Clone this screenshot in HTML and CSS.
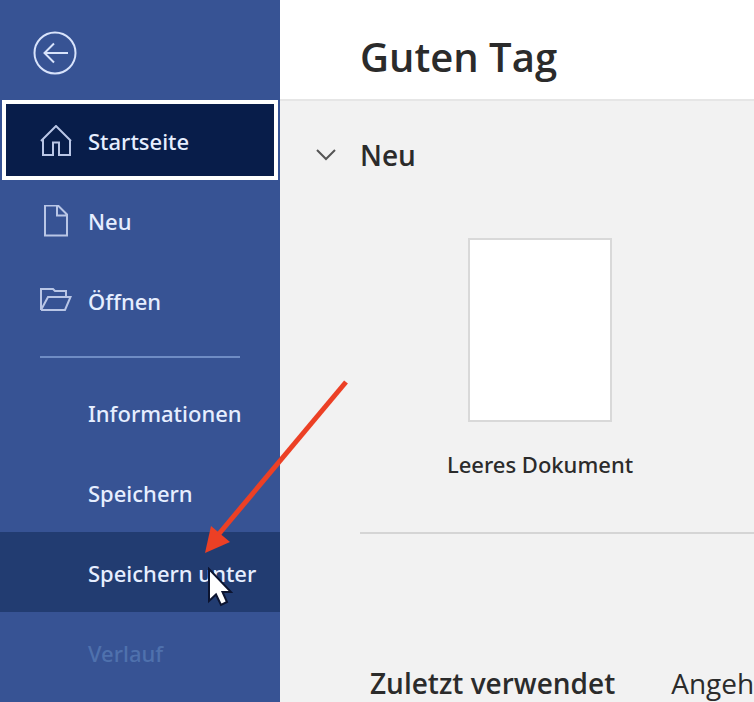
FILE: index.html
```html
<!DOCTYPE html>
<html lang="de">
<head>
<meta charset="utf-8">
<meta name="viewport" content="width=device-width, initial-scale=1">
<title>Guten Tag</title>
<link rel="stylesheet" href="styles.css">
</head>
<body>
<div class="app">
  <aside class="sidebar">
    <header class="sidebar-head">
      <button class="back" type="button" aria-label="Zurück">
        <svg width="44" height="44" viewBox="0 0 44 44" fill="none" stroke="currentColor" stroke-width="2">
          <circle cx="22" cy="22" r="20.5"/>
          <path d="M35 22H12M21 12.5L11.5 22L21 31.5"/>
        </svg>
      </button>
    </header>
    <nav class="menu">
      <a class="item item-current" href="#start">
        <svg class="icon" viewBox="0 0 32 32" fill="none" stroke="currentColor" stroke-width="2">
          <path d="M1 16L16 1L31 16M3 14.500V30H13V17.500H19V30H30V14.500"/>
        </svg>
        Startseite
      </a>
      <a class="item" href="#neu">
        <svg class="icon" viewBox="0 0 32 32" fill="none" stroke="currentColor" stroke-width="2">
          <path d="M5 0.500H18L27 9.500V30.500H5ZM17 0.500V10.500H27"/>
        </svg>
        Neu
      </a>
      <a class="item" href="#oeffnen">
        <svg class="icon" viewBox="0 0 32 32" fill="none" stroke="currentColor" stroke-width="2">
          <path d="M1 25V4H13L15 6H26V12M1 25L8 12H30.500L25 25H1"/>
        </svg>
        Öffnen
      </a>
      <hr class="menu-rule">
      <a class="item item-text" href="#info">Informationen</a>
      <a class="item item-text" href="#speichern">Speichern</a>
      <a class="item item-text item-hover" href="#speichern-unter">Speichern unter</a>
      <a class="item item-text item-disabled" aria-disabled="true">Verlauf</a>
    </nav>
  </aside>
  <main class="content">
    <header class="title-bar"><h1>Guten Tag</h1></header>
    <section class="new">
      <h2>
        <button class="toggle" type="button" aria-expanded="true">
          <svg width="20" height="12" viewBox="0 0 20 12" fill="none" stroke="#555" stroke-width="2">
            <path d="M1 1L10 10L19 1"/>
          </svg>
          Neu
        </button>
      </h2>
      <button class="template" type="button">
        <span class="sheet"></span>
        Leeres Dokument
      </button>
    </section>
    <div class="tabs">
      <button class="tab tab-active" type="button">Zuletzt verwendet</button>
      <button class="tab" type="button">Angeheftet</button>
    </div>
  </main>
  <svg class="pointer-arrow" width="146" height="176" viewBox="0 0 146 176">
    <path d="M142 2L14 155" stroke="#ec4025" stroke-width="5"/>
    <path d="M1 173L7 146L26 162Z" fill="#ec4025"/>
  </svg>
  <svg class="cursor" width="26" height="40" viewBox="0 0 26 40">
    <path d="M2 2V34L9 27.500L14 38L20 35L15.500 25H24Z" fill="#fff" stroke="#0c1430" stroke-width="2"/>
  </svg>
</div>
</body>
</html>
```
FILE: styles.css
```css
* {
  box-sizing: border-box;
}

body {
  margin: 0;
  font-family: "Noto Sans", "Open Sans", sans-serif;
  font-size: 22px;
  font-weight: 500;
  line-height: 32px;
  color: #2b2b2b;
  background: #f2f2f2;
}

h1,
h2 {
  margin: 0;
  font-weight: 600;
}

button {
  padding: 0;
  border: 0;
  background: none;
  font: inherit;
  color: inherit;
}

svg {
  display: block;
  flex: none;
}

.app {
  position: relative;
  display: flex;
  height: 100vh;
  overflow: hidden;
}

.sidebar {
  flex: none;
  width: 280px;
  background: #375394;
  color: #e6eeff;
}

.sidebar-head {
  display: flex;
  align-items: center;
  height: 100px;
  padding: 6px 33px 0;
}

.back {
  color: #d8e3fb;
}

.item {
  display: flex;
  align-items: center;
  gap: 16px;
  height: 80px;
  padding: 2px 0 0 40px;
  color: inherit;
  text-decoration: none;
  white-space: nowrap;
}

.item-current {
  margin: 0 2px;
  padding-left: 34px;
  border: 4px solid #fff;
  background: #081d4a;
}

.icon {
  width: 32px;
  height: 32px;
  color: #b9c6e6;
}

.item-text {
  padding-left: 88px;
}

.item-hover {
  background: #223c71;
}

.item-disabled {
  color: #4f71ad;
}

.menu-rule {
  width: 200px;
  height: 2px;
  margin: 16px 40px 14px;
  border: 0;
  background: #6f8cc4;
}

.content {
  flex: 1;
  min-width: 0;
  font-family: "Open Sans", "Noto Sans", sans-serif;
}

.title-bar {
  display: flex;
  align-items: center;
  height: 101px;
  padding: 14px 80px 0;
  border-bottom: 2px solid #e6e6e6;
  background: #fff;
}

h1 {
  font-size: 40px;
  line-height: 48px;
}

.new {
  margin-left: 80px;
  padding-bottom: 52px;
  border-bottom: 2px solid #d5d5d5;
}

.toggle {
  display: flex;
  align-items: center;
  gap: 24px;
  margin-left: -44px;
  padding: 38px 0 0;
  font-size: 28px;
}

.template {
  display: flex;
  flex-direction: column;
  align-items: center;
  gap: 26px;
  width: 200px;
  margin: 67px 0 0 80px;
  font-family: "Noto Sans", "Open Sans", sans-serif;
  white-space: nowrap;
}

.sheet {
  width: 144px;
  height: 184px;
  border: 2px solid #d9d9d9;
  background: #fff;
}

.tabs {
  display: flex;
  gap: 56px;
  margin: 133px 0 0 90px;
  font-size: 28px;
  white-space: nowrap;
}

.tab {
  font-weight: 400;
}

.tab-active {
  font-weight: 600;
}

.pointer-arrow {
  position: absolute;
  top: 380px;
  left: 204px;
}

.cursor {
  position: absolute;
  top: 567px;
  left: 207px;
}
```
